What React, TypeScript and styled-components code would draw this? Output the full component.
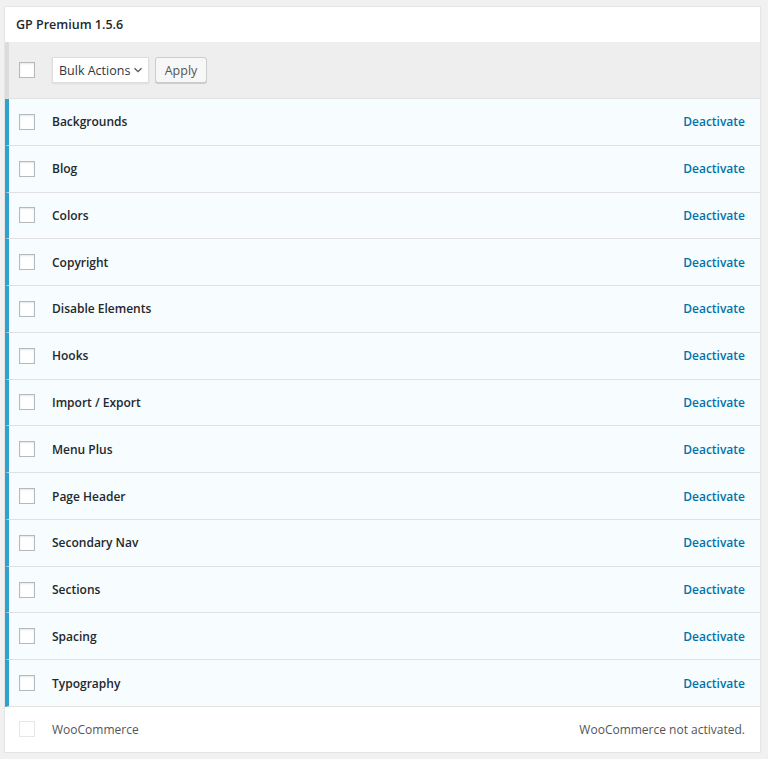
import React from "react";
import styled, { createGlobalStyle } from "styled-components";

const GlobalStyle = createGlobalStyle`
  html, body {
    margin: 0;
    padding: 0;
    background: #f1f1f1;
    font-family: "Open Sans", "Noto Sans", sans-serif;
    font-size: 12px;
    color: #23282d;
  }
`;

const Page = styled.div`
  padding: 6px 7px 0 4px;
`;

const Card = styled.div`
  width: 757px;
  box-sizing: border-box;
  background: #fff;
  border: 1px solid #e5e5e5;
  box-shadow: 0 1px 1px rgba(0, 0, 0, 0.04);
`;

const CardTitle = styled.div`
  height: 35px;
  display: flex;
  align-items: center;
  padding-left: 11px;
  font-weight: 600;
  font-size: 12.5px;
  color: #23282d;
`;

const Toolbar = styled.div`
  height: 57px;
  box-sizing: border-box;
  display: flex;
  align-items: center;
  background: #eeeeee;
  border-left: 4px solid #dcdcdc;
  border-bottom: 1px solid #e1e1e1;
  padding-left: 10px;
`;

const Check = styled.span<{ $disabled?: boolean }>`
  width: 16px;
  height: 16px;
  box-sizing: border-box;
  flex: none;
  background: #fff;
  border: 1px solid ${(p) => (p.$disabled ? "#e6e6e6" : "#b4b9be")};
  box-shadow: ${(p) =>
    p.$disabled ? "none" : "inset 0 1px 2px rgba(0, 0, 0, 0.1)"};
  margin-right: 17px;
`;

const Select = styled.div`
  width: 97px;
  height: 26px;
  box-sizing: border-box;
  display: flex;
  align-items: center;
  justify-content: space-between;
  background: #fff;
  border: 1px solid #ddd;
  box-shadow: 0 1px 2px rgba(0, 0, 0, 0.07);
  padding: 0 5px 0 6px;
  color: #32373c;
  font-size: 12.5px;
`;

const ApplyButton = styled.button`
  margin-left: 6px;
  height: 26px;
  width: 52px;
  box-sizing: border-box;
  background: #f7f7f7;
  border: 1px solid #ccc;
  border-radius: 3px;
  box-shadow: 0 1px 0 #ccc;
  color: #555;
  font-family: inherit;
  font-size: 12.5px;
  padding: 0;
`;

const Row = styled.div<{ $active?: boolean }>`
  height: ${(p) => (p.$active ? "46.77px" : "45px")};
  box-sizing: border-box;
  display: flex;
  align-items: center;
  background: ${(p) => (p.$active ? "#f7fcfe" : "#fff")};
  border-left: 4px solid ${(p) => (p.$active ? "#2ea2cc" : "transparent")};
  border-bottom: ${(p) => (p.$active ? "1px solid #e1e1e1" : "none")};
  padding: 0 15px 0 10px;
`;

const Name = styled.div<{ $active?: boolean }>`
  flex: 1;
  font-weight: ${(p) => (p.$active ? 600 : 400)};
  color: ${(p) => (p.$active ? "#23282d" : "#555")};
`;

const Action = styled.a`
  font-weight: 600;
  color: #0073aa;
  text-decoration: none;
`;

const Note = styled.span`
  color: #555;
`;

const modules = [
  "Backgrounds",
  "Blog",
  "Colors",
  "Copyright",
  "Disable Elements",
  "Hooks",
  "Import / Export",
  "Menu Plus",
  "Page Header",
  "Secondary Nav",
  "Sections",
  "Spacing",
  "Typography",
];

const Chevron = () => (
  <svg width="10" height="10" viewBox="0 0 10 10">
    <path d="M1.5 3.2 L5 6.6 L8.5 3.2" fill="none" stroke="#555" strokeWidth="1.3" />
  </svg>
);

const App = () => {
  return (
    <Page>
      <GlobalStyle />
      <Card>
        <CardTitle>GP Premium 1.5.6</CardTitle>
        <Toolbar>
          <Check />
          <Select>
            Bulk Actions
            <Chevron />
          </Select>
          <ApplyButton>Apply</ApplyButton>
        </Toolbar>
        {modules.map((m) => (
          <Row key={m} $active>
            <Check />
            <Name $active>{m}</Name>
            <Action href="#">Deactivate</Action>
          </Row>
        ))}
        <Row>
          <Check $disabled />
          <Name>WooCommerce</Name>
          <Note>WooCommerce not activated.</Note>
        </Row>
      </Card>
    </Page>
  );
};

export default App;
